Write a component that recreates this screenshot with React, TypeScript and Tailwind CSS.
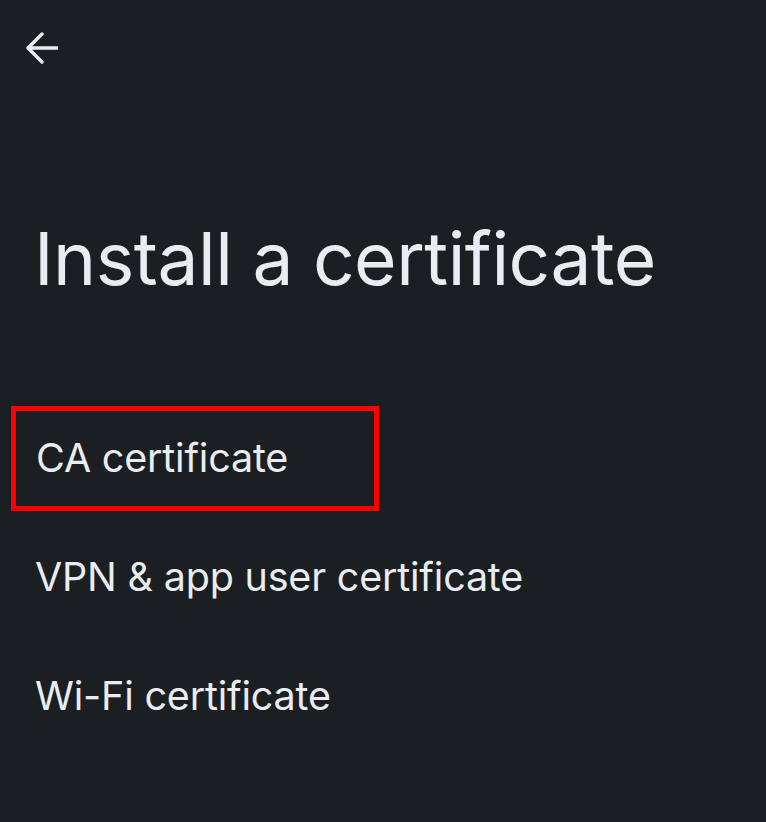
export default function App() {
  const items = ["CA certificate", "VPN & app user certificate", "Wi-Fi certificate"];

  return (
    <div
      className="w-[766px] h-[822px] bg-[#1b1f22] text-[#e9edf3] overflow-hidden"
      style={{ fontFamily: "Inter, Roboto, sans-serif" }}
    >
      <header className="h-[96px] pl-[26px] pt-[32px]">
        <svg width="32" height="32" viewBox="0 0 32 32" fill="none" stroke="currentColor" strokeWidth="3.4" strokeLinecap="round" strokeLinejoin="round">
          <path d="M31 16H2M16 2L2 16l14 14" />
        </svg>
      </header>

      <h1 className="pl-[34px] mt-[126px] text-[73px] leading-none tracking-[-0.5px] font-normal">
        Install a certificate
      </h1>

      <ul className="mt-[104px] flex flex-col">
        {items.map((label, i) => (
          <li key={label} className="h-[119px] flex items-center">
            <div
              className={
                i === 0
                  ? "ml-[11px] w-[368px] h-[105px] border-[5px] border-[#ff0000] flex items-center pl-[20px]"
                  : "pl-[35px]"
              }
            >
              <span className="text-[39.5px] leading-none tracking-[-0.2px]">{label}</span>
            </div>
          </li>
        ))}
      </ul>
    </div>
  );
}
